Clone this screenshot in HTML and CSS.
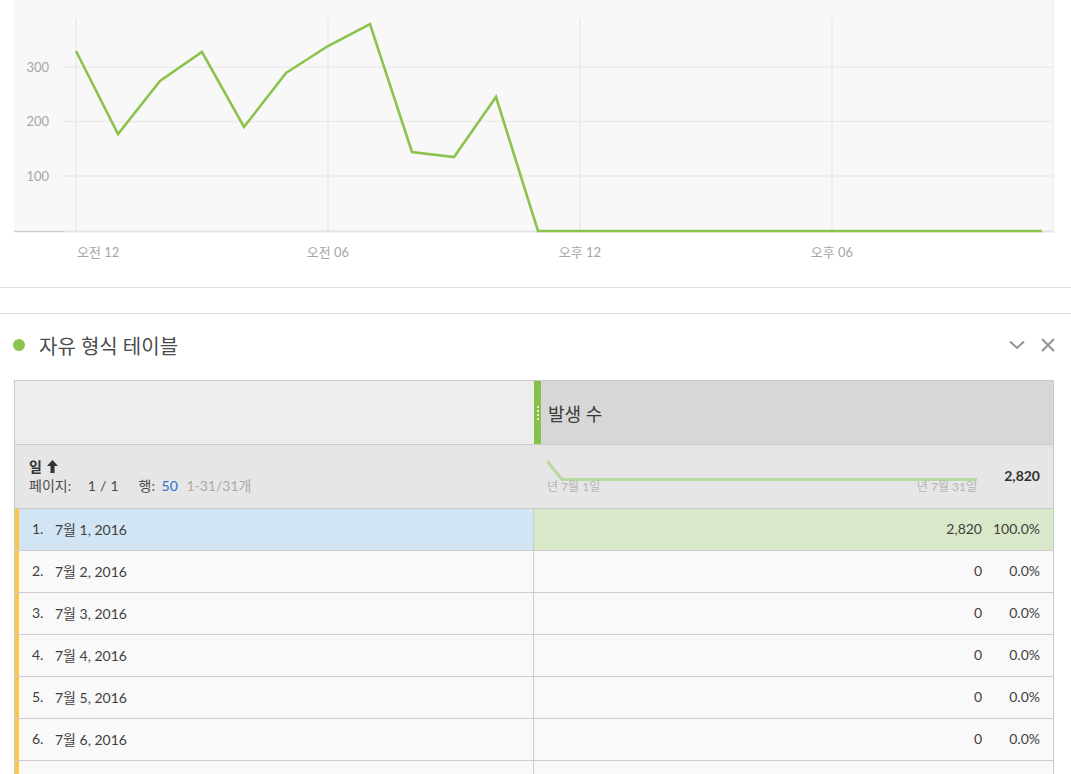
FILE: index.html
```html
<!DOCTYPE html>
<html lang="ko">
<head>
<meta charset="utf-8">
<title>자유 형식 테이블</title>
<link rel="stylesheet" href="styles.css">
</head>
<body>
<section class="chart-panel">
  <svg class="chart" width="1071" height="287" viewBox="0 0 1071 287">
    <rect x="14" y="0" width="1040" height="232" fill="#f8f8f8"/>
    <line x1="1053.5" y1="0" x2="1053.5" y2="232" stroke="#ebebeb" stroke-width="1"/>
    <g stroke="#ebebeb" stroke-width="1.5">
      <line x1="64" y1="67" x2="1054" y2="67"/>
      <line x1="64" y1="121.5" x2="1054" y2="121.5"/>
      <line x1="64" y1="176" x2="1054" y2="176"/>
      <line x1="76" y1="18" x2="76" y2="231"/>
      <line x1="328" y1="18" x2="328" y2="231"/>
      <line x1="580" y1="18" x2="580" y2="231"/>
      <line x1="832" y1="18" x2="832" y2="231"/>
    </g>
    <line x1="64" y1="231.5" x2="1054" y2="231.5" stroke="#e4e4e4" stroke-width="2"/>
    <line x1="14" y1="231.5" x2="64" y2="231.5" stroke="#cfcfcf" stroke-width="1.5"/>
    <g class="ylab">
      <text x="49" y="72" text-anchor="end">300</text>
      <text x="49" y="126" text-anchor="end">200</text>
      <text x="49" y="181" text-anchor="end">100</text>
    </g>
    <polyline fill="none" stroke="#8cc34f" stroke-width="2.6" stroke-linejoin="miter"
      points="76,51 118,134 160,81 202,52 244,127 286,73 328,46 370,24 412,152 454,157 496,97 538,231 1042,231"/>
    <g class="xlab">
      <text x="77" y="257">오전 12</text>
      <text x="328" y="257" text-anchor="middle">오전 06</text>
      <text x="580" y="257" text-anchor="middle">오후 12</text>
      <text x="832" y="257" text-anchor="middle">오후 06</text>
    </g>
  </svg>
</section>

<section class="table-panel">
  <header class="panel-head">
    <span class="dot"></span>
    <h2 class="panel-title">자유 형식 테이블</h2>
    <div class="panel-actions">
      <svg class="icon" width="16" height="10" viewBox="0 0 16 10"><path d="M1 1.5 L8 8 L15 1.5" fill="none" stroke="#929292" stroke-width="2"/></svg>
      <svg class="icon" width="14" height="14" viewBox="0 0 14 14"><path d="M1 1 L13 13 M13 1 L1 13" fill="none" stroke="#929292" stroke-width="2"/></svg>
    </div>
  </header>

  <div class="ftable">
    <div class="hrow1">
      <div class="hcell-left"></div>
      <div class="hcell-metric">
        <span class="handle"><i></i><i></i><i></i><i></i></span>
        <span class="metric-name">발생 수</span>
      </div>
    </div>
    <div class="hrow2">
      <div class="dim-cell">
        <div class="dim-name">일 <svg class="sort" width="11" height="13" viewBox="0 0 11 13"><path d="M5.5 0 L11 6 L7.5 6 L7.5 13 L3.5 13 L3.5 6 L0 6 Z" fill="#333"/></svg></div>
        <div class="pager"><span>페이지:</span> <span class="pg">1 / 1</span> <span class="rows-label">행:</span> <span class="rows-num">50</span> <span class="range">1-31/31개</span></div>
      </div>
      <div class="total-cell">
        <div class="spark">
          <svg width="432" height="24" viewBox="0 0 432 24"><polyline points="0,2 15,20.5 430,20.5" fill="none" stroke="#b8d9a0" stroke-width="3"/></svg>
          <div class="spark-labels"><span>년 7월 1일</span><span>년 7월 31일</span></div>
        </div>
        <div class="total">2,820</div>
      </div>
    </div>

    <div class="row selected">
      <div class="cell-dim"><span class="num">1.</span>7월 1, 2016</div>
      <div class="cell-val"><span class="v">2,820</span><span class="p">100.0%</span></div>
    </div>
    <div class="row">
      <div class="cell-dim"><span class="num">2.</span>7월 2, 2016</div>
      <div class="cell-val"><span class="v">0</span><span class="p">0.0%</span></div>
    </div>
    <div class="row">
      <div class="cell-dim"><span class="num">3.</span>7월 3, 2016</div>
      <div class="cell-val"><span class="v">0</span><span class="p">0.0%</span></div>
    </div>
    <div class="row">
      <div class="cell-dim"><span class="num">4.</span>7월 4, 2016</div>
      <div class="cell-val"><span class="v">0</span><span class="p">0.0%</span></div>
    </div>
    <div class="row">
      <div class="cell-dim"><span class="num">5.</span>7월 5, 2016</div>
      <div class="cell-val"><span class="v">0</span><span class="p">0.0%</span></div>
    </div>
    <div class="row">
      <div class="cell-dim"><span class="num">6.</span>7월 6, 2016</div>
      <div class="cell-val"><span class="v">0</span><span class="p">0.0%</span></div>
    </div>
    <div class="row">
      <div class="cell-dim"></div>
      <div class="cell-val"></div>
    </div>
  </div>
</section>
</body>
</html>
```

FILE: styles.css
```css
* { box-sizing: border-box; }
html, body { margin: 0; padding: 0; }
body {
  width: 1071px;
  height: 774px;
  overflow: hidden;
  background: #ffffff;
  font-family: Lato, "Noto Sans CJK KR", "Noto Sans", sans-serif;
  color: #4b4b4b;
}

.chart-panel {
  height: 288px;
  border-bottom: 1px solid #dedede;
}
.chart { display: block; }
.ylab text, .xlab text {
  font-family: Lato, "Noto Sans CJK KR", sans-serif;
  font-size: 13px;
  fill: #a6a6a6;
}

.table-panel {
  margin-top: 25px;
  border-top: 1px solid #dedede;
}

.panel-head {
  height: 62px;
  margin-bottom: 4px;
  display: flex;
  align-items: center;
  padding: 0 16px 0 13px;
}
.dot {
  width: 12px;
  height: 12px;
  border-radius: 50%;
  background: #8cc34f;
  margin-right: 14px;
}
.panel-title {
  margin: 0;
  font-size: 20px;
  font-weight: 400;
  color: #4b4b4b;
  flex: 1;
}
.panel-actions {
  display: flex;
  align-items: center;
  gap: 16px;
  padding-left: 2px;
}
.icon { display: block; }

.ftable {
  margin-left: 14px;
  width: 1040px;
  border: 1px solid #c9c9c9;
  border-bottom: none;
}

.hrow1 {
  display: flex;
  height: 64px;
  border-bottom: 1px solid #c9c9c9;
}
.hcell-left {
  width: 519px;
  background: #ededed;
}
.hcell-metric {
  flex: 1;
  background: #d7d7d7;
  display: flex;
  align-items: center;
}
.handle {
  width: 7px;
  align-self: stretch;
  background: #86c24a;
  display: flex;
  flex-direction: column;
  justify-content: center;
  align-items: center;
  gap: 2px;
}
.handle i {
  width: 2px;
  height: 2px;
  background: #e6f2d8;
}
.metric-name {
  margin-left: 7px;
  font-size: 18px;
  color: #3a3a3a;
  margin-top: 1px;
}

.hrow2 {
  display: flex;
  height: 64px;
  background: #e6e6e6;
  border-bottom: 1px solid #c9c9c9;
}
.dim-cell {
  width: 519px;
  padding: 13px 0 0 14px;
}
.dim-name {
  font-size: 14px;
  font-weight: 700;
  color: #333;
  line-height: 18px;
  display: flex;
  align-items: center;
  gap: 5px;
}
.sort { display: block; margin-top: -1px; }
.pager {
  font-size: 14px;
  color: #4b4b4b;
  line-height: 20px;
}
.pg { margin-left: 13px; letter-spacing: 0.3px; }
.rows-label { margin-left: 16px; }
.rows-num { color: #2f6fc9; margin-left: 3px; }
.range { color: #a9a9a9; margin-left: 5px; }

.total-cell {
  flex: 1;
  display: flex;
  padding: 14px 13px 0 13px;
}
.spark { width: 432px; }
.spark svg { display: block; }
.spark-labels {
  display: flex;
  justify-content: space-between;
  width: 430px;
  font-size: 12px;
  color: #b4b4b4;
  line-height: 14px;
  margin-top: -3px;
}
.total {
  flex: 1;
  text-align: right;
  font-size: 14px;
  font-weight: 700;
  color: #333;
  padding-top: 8px;
}

.row {
  display: flex;
  height: 42px;
  border-bottom: 1px solid #cdcdcd;
  background: #f9f9f9;
}
.cell-dim {
  width: 519px;
  border-left: 4px solid #fdc944;
  border-right: 1px solid #cdcdcd;
  display: flex;
  align-items: center;
  padding-left: 13px;
  padding-bottom: 2px;
  font-size: 14px;
  color: #3f3f3f;
}
.num { width: 23px; }
.cell-val {
  flex: 1;
  display: flex;
  align-items: center;
  justify-content: flex-end;
  padding-right: 13px;
  padding-bottom: 2px;
  font-size: 14px;
  color: #3f3f3f;
}
.p {
  min-width: 58px;
  text-align: right;
}
.row.selected .cell-dim { background: #d2e5f4; }
.row.selected .cell-val { background: #d9e8c9; }
```
